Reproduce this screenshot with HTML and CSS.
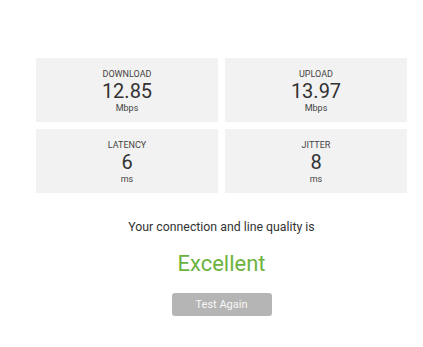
FILE: index.html
```html
<!DOCTYPE html>
<html lang="en">
<head>
  <meta charset="UTF-8" />
  <title>Speed Test Result</title>
  <link rel="stylesheet" href="styles.css">
</head>
<body>

  <div class="result">
    <!-- Stats grid -->
    <div class="stats">
      <div class="stat">
        <div class="stat-label">DOWNLOAD</div>
        <div class="stat-value">12.85</div>
        <div class="stat-unit">Mbps</div>
      </div>
      <div class="stat">
        <div class="stat-label">UPLOAD</div>
        <div class="stat-value">13.97</div>
        <div class="stat-unit">Mbps</div>
      </div>
      <div class="stat">
        <div class="stat-label">LATENCY</div>
        <div class="stat-value">6</div>
        <div class="stat-unit">ms</div>
      </div>
      <div class="stat">
        <div class="stat-label">JITTER</div>
        <div class="stat-value">8</div>
        <div class="stat-unit">ms</div>
      </div>
    </div>

    <p class="quality-text">Your connection and line quality is</p>
    <p class="quality-value">Excellent</p>

    <button class="retry-btn">Test Again</button>
  </div>

</body>
</html>
```

FILE: styles.css
```css
* {
  box-sizing: border-box;
  margin: 0;
  padding: 0;
}

body {
  font-family: Roboto, "Liberation Sans", sans-serif;
  background: #fff;
  color: #333;
}

.result {
  width: 371px;
  margin: 58px 0 0 36px;
  display: flex;
  flex-direction: column;
  align-items: center;
}

.stats {
  width: 100%;
  display: grid;
  grid-template-columns: 1fr 1fr;
  gap: 7px;
}

.stat {
  height: 64px;
  background: #f2f2f2;
  display: flex;
  flex-direction: column;
  align-items: center;
  padding-top: 10px;
}

.stat-label {
  font-size: 9px;
  line-height: 12px;
  color: #444;
}

.stat-value {
  font-size: 20px;
  line-height: 22px;
  color: #333;
}

.stat-unit {
  font-size: 9px;
  line-height: 13px;
  color: #444;
}

.quality-text {
  margin-top: 26px;
  font-size: 12.3px;
  line-height: 16px;
  color: #333;
}

.quality-value {
  margin-top: 16px;
  font-size: 22px;
  line-height: 26px;
  color: #6db33f;
}

.retry-btn {
  margin-top: 16px;
  width: 100px;
  height: 23px;
  border: none;
  border-radius: 3px;
  background: #b5b5b5;
  color: #f7f7f7;
  font-family: inherit;
  font-size: 11px;
}
```
